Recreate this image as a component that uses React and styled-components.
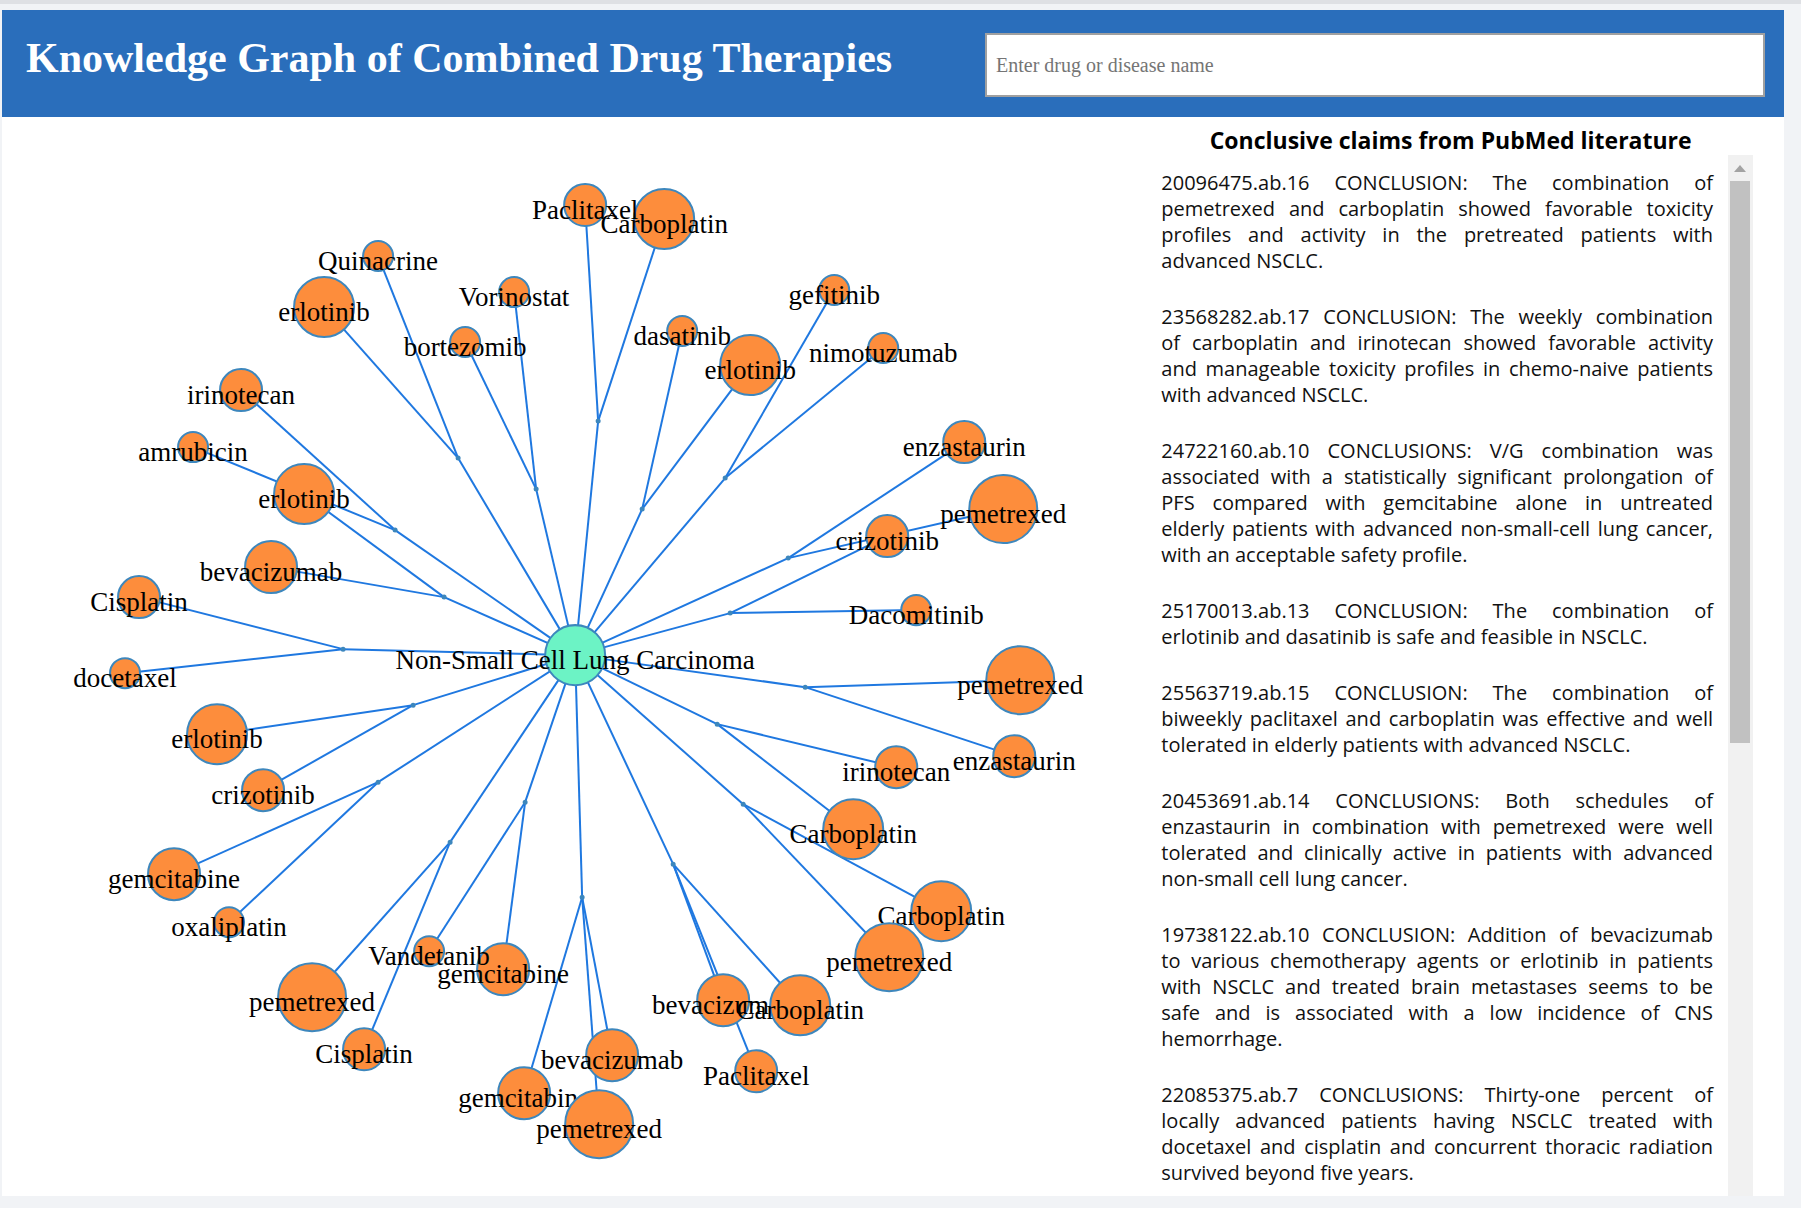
import React, { useState } from 'react';
import styled, { createGlobalStyle } from 'styled-components';

const GlobalStyle = createGlobalStyle`
  * { box-sizing: border-box; }
  body { margin: 0; background: #f1f3f6; }
`;

const serif = `'Liberation Serif', 'Times New Roman', serif`;
const sans = `'Segoe UI', 'Open Sans', 'Noto Sans', sans-serif`;

const Page = styled.div`
  display: flex;
  flex-direction: column;
  min-height: 100vh;
  padding: 0 17px 12px 2px;
  border-top: 4px solid #dee0e4;
`;

const Header = styled.header`
  display: grid;
  grid-template-columns: minmax(0, 983fr) minmax(0, 780fr);
  align-items: center;
  margin-top: 6px;
  padding: 23px 19px 20px 0;
  background: #2a6ebb;
`;

const Title = styled.h1`
  margin: 0;
  padding: 0 24px 14px;
  color: #fff;
  font: bold 42px/48px ${serif};
`;

const Search = styled.input`
  width: 100%;
  height: 64px;
  padding: 0 9px;
  border: 2px solid #a0a0a0;
  border-radius: 0;
  background: #fff;
  color: #000;
  font: 20px ${serif};
  &::placeholder { color: #757575; opacity: 1; }
`;

const Content = styled.main`
  display: grid;
  grid-template-columns: minmax(0, 13fr) minmax(0, 7fr);
  flex: 1;
  background: #fff;
`;

const Graph = styled.svg`
  display: block;
  width: 100%;
  height: auto;
`;

const Link = styled.line`
  stroke: #1f78e0;
  stroke-width: 2px;
`;

const Dot = styled.circle`
  fill: ${(p) => p.$fill || '#fd8d3c'};
  stroke: #3d87bd;
  stroke-width: 2px;
`;

const Label = styled.text`
  font: 27px ${serif};
  text-anchor: middle;
  fill: #000;
`;

const Panel = styled.section`
  display: flex;
  flex-direction: column;
  min-width: 0;
  padding: 8px 31px 0 0;
  font-family: ${sans};
`;

const PanelTitle = styled.h2`
  margin: 0;
  padding-right: 12px;
  text-align: center;
  font-size: 23px;
  line-height: 30px;
`;

const Scroller = styled.div`
  display: flex;
  flex: 1;
  gap: 15px;
`;

const Claims = styled.div`
  display: flex;
  flex-direction: column;
  flex: 1;
  gap: 30px;
  min-width: 0;
  padding: 15px 0 0 1px;
`;

const Claim = styled.p`
  margin: 0;
  color: #111;
  font-size: 20px;
  line-height: 26px;
  text-align: justify;
`;

const Track = styled.div`
  display: flex;
  flex-direction: column;
  align-items: center;
  width: 25px;
  background: #f1f1f1;
`;

const Arrow = styled.svg`
  width: 12px;
  height: 26px;
`;

const Thumb = styled.div`
  width: 20px;
  height: 54%;
  background: #c1c1c1;
`;

const center = { x: 575, y: 655 };

// Each hub joins the disease to the drugs that were used together.
const hubs = [
  [458, 458, [[378, 256], [324, 307]]],
  [536, 489, [[514, 292], [465, 342]]],
  [395, 530, [[241, 390], [193, 447]]],
  [444, 597, [[304, 494], [271, 567]]],
  [343, 649, [[139, 597], [125, 673]]],
  [413, 705, [[217, 734], [263, 790]]],
  [378, 782, [[174, 874], [229, 922]]],
  [450, 842, [[312, 997], [364, 1049]]],
  [525, 802, [[429, 951], [503, 969]]],
  [582, 897, [[524, 1093], [612, 1055], [599, 1124]]],
  [673, 864, [[723, 1000], [800, 1005], [756, 1071]]],
  [743, 804, [[941, 911], [889, 957]]],
  [717, 724, [[896, 767], [853, 829]]],
  [805, 687, [[1020, 680], [1014, 756]]],
  [730, 613, [[916, 610], [887, 536]]],
  [788, 558, [[964, 442], [1003, 509]]],
  [725, 478, [[834, 290], [883, 348]]],
  [642, 509, [[682, 331], [750, 365]]],
  [598, 421, [[585, 205], [664, 219]]],
];

const radius = { xs: 15, s: 21, m: 26, l: 30, xl: 34 };

// Painted in order, so a later drug covers an earlier one.
const drugs = [
  ['Quinacrine', 378, 256, 'xs'],
  ['erlotinib', 324, 307, 'l'],
  ['Vorinostat', 514, 292, 'xs'],
  ['bortezomib', 465, 342, 'xs'],
  ['irinotecan', 241, 390, 's'],
  ['amrubicin', 193, 447, 'xs'],
  ['erlotinib', 304, 494, 'l'],
  ['bevacizumab', 271, 567, 'm'],
  ['Cisplatin', 139, 597, 's'],
  ['docetaxel', 125, 673, 'xs'],
  ['erlotinib', 217, 734, 'l'],
  ['crizotinib', 263, 790, 's'],
  ['gemcitabine', 174, 874, 'm'],
  ['oxaliplatin', 229, 922, 'xs'],
  ['pemetrexed', 312, 997, 'xl'],
  ['Cisplatin', 364, 1049, 's'],
  ['gemcitabine', 503, 969, 'm'],
  ['Vandetanib', 429, 951, 'xs'],
  ['gemcitabine', 524, 1093, 'm'],
  ['bevacizumab', 612, 1055, 'm'],
  ['pemetrexed', 599, 1124, 'xl'],
  ['Paclitaxel', 756, 1071, 's'],
  ['bevacizumab', 723, 1000, 'm'],
  ['Carboplatin', 800, 1005, 'l'],
  ['Carboplatin', 941, 911, 'l'],
  ['pemetrexed', 889, 957, 'xl'],
  ['Carboplatin', 853, 829, 'l'],
  ['irinotecan', 896, 767, 's'],
  ['enzastaurin', 1014, 756, 's'],
  ['pemetrexed', 1020, 680, 'xl'],
  ['Dacomitinib', 916, 610, 'xs'],
  ['pemetrexed', 1003, 509, 'xl'],
  ['crizotinib', 887, 536, 's'],
  ['enzastaurin', 964, 442, 's'],
  ['erlotinib', 750, 365, 'l'],
  ['nimotuzumab', 883, 348, 'xs'],
  ['gefitinib', 834, 290, 'xs'],
  ['dasatinib', 682, 331, 'xs'],
  ['Carboplatin', 664, 219, 'l'],
  ['Paclitaxel', 585, 205, 's'],
];

const claims = [
  '20096475.ab.16 CONCLUSION: The combination of pemetrexed and carboplatin showed favorable toxicity profiles and activity in the pretreated patients with advanced NSCLC.',
  '23568282.ab.17 CONCLUSION: The weekly combination of\u00a0carboplatin and irinotecan showed favorable activity and\u00a0manageable toxicity profiles in chemo-naive patients with\u00a0advanced NSCLC.',
  '24722160.ab.10 CONCLUSIONS: V/G combination was associated with a statistically significant prolongation of PFS compared with gemcitabine alone in untreated elderly\u00a0patients with advanced non-small-cell lung cancer, with\u00a0an acceptable safety profile.',
  '25170013.ab.13 CONCLUSION: The combination of erlotinib and dasatinib is safe and feasible in NSCLC.',
  '25563719.ab.15 CONCLUSION: The combination of biweekly paclitaxel and carboplatin was effective and well tolerated in elderly patients with advanced NSCLC.',
  '20453691.ab.14 CONCLUSIONS: Both schedules of enzastaurin in combination with pemetrexed were well tolerated and clinically active in patients with advanced non-small cell lung cancer.',
  '19738122.ab.10 CONCLUSION: Addition of bevacizumab to\u00a0various chemotherapy agents or erlotinib in patients with NSCLC and treated brain metastases seems to be safe\u00a0and is associated with a low incidence of CNS hemorrhage.',
  '22085375.ab.7 CONCLUSIONS: Thirty-one percent of locally\u00a0advanced patients having NSCLC treated with docetaxel and cisplatin and concurrent thoracic radiation survived beyond five years.',
];

function Node({ name, x, y, r, fill }) {
  return (
    <g>
      <Dot cx={x} cy={y} r={r} $fill={fill} />
      <Label x={x} y={y + 14}>{name}</Label>
    </g>
  );
}

export default function App() {
  const [query, setQuery] = useState('');
  return (
    <Page>
      <GlobalStyle />
      <Header>
        <Title>Knowledge Graph of Combined Drug Therapies</Title>
        <Search
          type="text"
          aria-label="Enter drug or disease name"
          placeholder="Enter drug or disease name"
          value={query}
          onChange={(e) => setQuery(e.target.value)}
        />
      </Header>
      <Content>
        <Graph viewBox="2 117 1158 1079">
          {hubs.map(([x, y, ends]) => (
            <g key={`${x}-${y}`}>
              <Link x1={center.x} y1={center.y} x2={x} y2={y} />
              {ends.map(([ex, ey]) => (
                <Link key={`${ex}-${ey}`} x1={x} y1={y} x2={ex} y2={ey} />
              ))}
            </g>
          ))}
          {hubs.map(([x, y]) => (
            <Dot key={`${x}-${y}`} cx={x} cy={y} r={1.5} $fill="#3d87bd" />
          ))}
          <Node name="Non-Small Cell Lung Carcinoma" x={center.x} y={center.y} r={30} fill="#6cf3c5" />
          {drugs.map(([name, x, y, size]) => (
            <Node key={`${name}-${x}`} name={name} x={x} y={y} r={radius[size]} />
          ))}
        </Graph>
        <Panel>
          <PanelTitle>Conclusive claims from PubMed literature</PanelTitle>
          <Scroller>
            <Claims>
              {claims.map((text) => (
                <Claim key={text}>{text}</Claim>
              ))}
            </Claims>
            <Track aria-hidden="true">
              <Arrow viewBox="0 0 12 26">
                <path d="M0 17 L6 10 L12 17 Z" fill="#a3a3a3" />
              </Arrow>
              <Thumb />
            </Track>
          </Scroller>
        </Panel>
      </Content>
    </Page>
  );
}
